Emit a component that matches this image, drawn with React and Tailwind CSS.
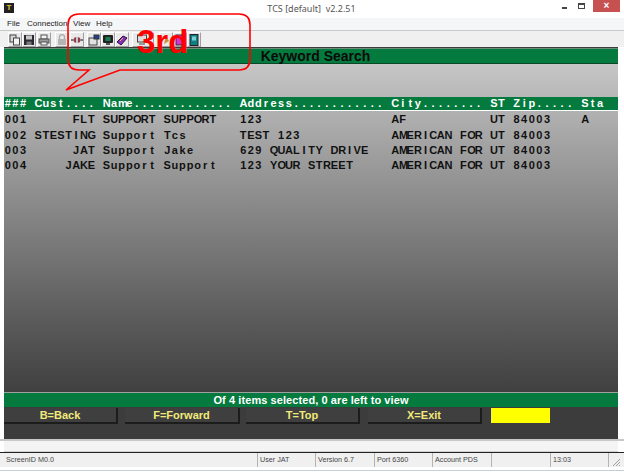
const CHAR_WIDTH = 7.6

const fields = (cells) => {
  const widths = [4, 9, 18, 20, 13, 3, 9, 3]
  return cells.map((c, i) => c.padEnd(widths[i], ' ')).join('')
}

const header = fields(['###', 'Cust....', 'Name.............', 'Address............', 'City........', 'ST', 'Zip.....', 'Sta'])
const rows = [
  fields(['001', '     FLT', 'SUPPORT SUPPORT', '123', 'AF', 'UT', '84003', 'A']),
  fields(['002', 'STESTING', 'Support Tcs', 'TEST 123', 'AMERICAN FOR', 'UT', '84003', '']),
  fields(['003', '     JAT', 'Support Jake', '629 QUALITY DRIVE', 'AMERICAN FOR', 'UT', '84003', '']),
  fields(['004', '    JAKE', 'Support Support', '123 YOUR STREET', 'AMERICAN FOR', 'UT', '84003', '']),
]

// El terminal pinta cada carácter en una celda fija, aunque la fuente sea proporcional
function TermLine({ text, className }) {
  return (
    <div className={`flex whitespace-pre text-[11px] font-bold leading-none ${className}`}>
      {[...text].map((ch, i) => (
        <span key={i} className="inline-block text-center" style={{ width: CHAR_WIDTH }}>
          {ch}
        </span>
      ))}
    </div>
  )
}

function ToolButton({ children, className = '' }) {
  return (
    <div className={`flex h-[15px] w-[14px] items-center justify-center border border-t-white border-r-[#a0a0a0] border-b-[#a0a0a0] border-l-white bg-[#e9e9e9] ${className}`}>
      <svg width="12" height="12" viewBox="0 0 12 12" className="shrink-0">{children}</svg>
    </div>
  )
}

function Toolbar() {
  return (
    <div className="flex h-[17px] items-start border-t border-[#c9c9c9] bg-[#f0f0f0] pt-[1px] pl-[8px]">
      <ToolButton>
        <rect x="1" y="1" width="6" height="7" fill="#d8d8d8" stroke="#444" />
        <rect x="4.5" y="4" width="6" height="7" fill="#f4f4f4" stroke="#444" />
      </ToolButton>
      <ToolButton>
        <rect x="1" y="1" width="10" height="10" fill="#2a2a34" />
        <rect x="3" y="1.5" width="6" height="4" fill="#c8c8c8" />
        <rect x="3.5" y="7.5" width="5" height="3.5" fill="#777" />
      </ToolButton>
      <ToolButton className="ml-[1px]">
        <rect x="3" y="1" width="6" height="4" fill="#f4f4f4" stroke="#555" />
        <rect x="1" y="5" width="10" height="4" fill="#999" stroke="#555" />
        <rect x="3" y="8" width="6" height="3" fill="#f4f4f4" stroke="#555" />
      </ToolButton>
      <ToolButton className="ml-[4px]">
        <path d="M3.5 5V3.2a2.5 2.5 0 0 1 5 0V5" fill="none" stroke="#aaa" strokeWidth="1.3" />
        <rect x="2" y="5" width="8" height="6" fill="#b4b4b4" />
      </ToolButton>
      <ToolButton className="ml-[1px]">
        <ellipse cx="6" cy="6" rx="3.5" ry="3" fill="#9a3a48" />
        <rect x="5" y="3" width="2" height="6" fill="#c8c8c8" />
        <path d="M0 6h2.5M9.5 6h2.5" stroke="#555" strokeWidth="1.6" />
      </ToolButton>
      <ToolButton className="ml-[3px]">
        <rect x="1" y="4" width="8" height="7" fill="#e0e0e0" stroke="#444" />
        <rect x="6" y="1" width="5" height="4" fill="#22409a" stroke="#333" />
      </ToolButton>
      <ToolButton>
        <rect x="1" y="1" width="10" height="8" rx="1" fill="#222" />
        <rect x="3.5" y="3" width="5" height="4" fill="#1c7a55" />
        <rect x="4" y="9" width="4" height="2" fill="#555" />
      </ToolButton>
      <ToolButton>
        <path d="M1 8l6-6 4 2-6 7z" fill="#8a2fb8" stroke="#2a1040" />
        <path d="M4 7l3-3" stroke="#e8c14a" />
      </ToolButton>
      <ToolButton className="ml-[3px] w-[22px]!">
        <rect x="0.5" y="1" width="9" height="7" fill="#ddd" stroke="#444" />
        <rect x="2" y="8" width="6" height="3" fill="#999" />
      </ToolButton>
      <ToolButton className="ml-[5px]">
        <path d="M4 10l2-8 3 5z" fill="#c98f3a" />
      </ToolButton>
      <ToolButton>
        <rect x="2" y="1" width="8" height="10" fill="#d633d6" stroke="#333" />
      </ToolButton>
      <ToolButton>
        <rect x="2" y="0.5" width="8" height="11" fill="#0f7f86" stroke="#222" />
        <rect x="4" y="2.5" width="4" height="4" fill="#7ad0d4" />
      </ToolButton>
    </div>
  )
}

function FnKey({ label, className }) {
  return (
    <div className={`flex h-[16px] items-center justify-center border-r-2 border-b-2 border-[#1c1c1c] bg-[#3f3f3f] text-[11px] font-bold text-[#f2ea7a] ${className}`}>
      {label}
    </div>
  )
}

function StatusCell({ children, className }) {
  return (
    <div className={`flex h-full items-center border-r border-[#b4b4b4] pl-[2px] ${className}`}>{children}</div>
  )
}

export default function App() {
  return (
    <div className="relative flex h-[472px] w-[624px] flex-col overflow-hidden bg-white font-['Liberation_Sans',sans-serif]">
      {/* barra de título */}
      <div className="relative flex h-[18px] items-center justify-center bg-white pr-[1px] text-[9px] text-[#555]">
        <div className="absolute top-[3px] left-[4px] flex h-[10px] w-[10px] items-center justify-center bg-[#222] text-[8px] font-bold leading-none text-[#e4c63c]">
          T
        </div>
        <span className="font-['Noto_Sans',sans-serif] whitespace-pre">TCS [default]  v2.2.51</span>
        <div className="absolute top-0 right-[4px] flex h-[12px] items-start">
          <div className="mt-[7px] mr-[11px] h-[2px] w-[5px] bg-[#444]" />
          <div className="mt-[3px] mr-[8px] h-[6px] w-[7px] border border-t-2 border-[#444]" />
          <div className="flex h-[12px] w-[27px] items-center justify-center bg-[#c75050] text-[10px] font-bold leading-none text-white">
            ×
          </div>
        </div>
      </div>

      {/* menú */}
      <div className="flex h-[12px] items-center bg-[#f5f6f7] pl-[7px] text-[8px] text-[#222]">
        <span className="w-[20px]">File</span>
        <span className="w-[46px]">Connection</span>
        <span className="w-[23px]">View</span>
        <span>Help</span>
      </div>

      <Toolbar />

      {/* pantalla del terminal */}
      <div className="ml-[4px] flex w-[614px] flex-1 flex-col bg-[#3c3c3c]">
        <div className="mt-[1px] flex h-[16px] items-center justify-center border-t border-b border-t-[#6b8f7a] border-b-[#0a4a28] bg-[#047a3e] pl-[9px] text-[14px] font-bold text-[#0a0a0a]">
          Keyword Search
        </div>
        <div className="flex h-[328px] flex-col bg-linear-to-b from-[#c6c6c6] to-[#404040]">
          <div className="mt-[33px] flex h-[14px] items-center border-b border-white bg-[#047a3e]">
            <TermLine text={header} className="text-white" />
          </div>
          <div className="mt-[1px]">
            {rows.map((row) => (
              <div key={row} className="flex h-[15.4px] items-center">
                <TermLine text={row} className="text-[#111]" />
              </div>
            ))}
          </div>
        </div>
        <div className="flex h-[15px] items-center justify-center border-t border-[#a0a0a0] bg-[#047a3e] text-[11px] font-bold tracking-[0.08px] text-white">
          Of 4 items selected, 0 are left to view
        </div>
        <div className="mt-[1px] flex">
          <FnKey label="B=Back" className="w-[114px]" />
          <FnKey label="F=Forward" className="ml-[7px] w-[115px]" />
          <FnKey label="T=Top" className="ml-[6px] w-[114px]" />
          <FnKey label="X=Exit" className="ml-[8px] w-[114px]" />
          <div className="ml-[8px] h-[15px] w-[60px] border-l border-[#2a2a9a] bg-[#ffff00]" />
        </div>
        <div className="flex-1" />
      </div>

      {/* línea de entrada y barra de estado */}
      <div className="h-[2px] w-full bg-[#c8c8c8]" />
      <div className="ml-[4px] h-[11px] w-[614px] border-b border-[#d0d0d0] bg-[#f4f4f4]" />
      <div className="h-[1px] bg-[#222]" />
      <div className="flex h-[14px] items-center bg-[#f0f0f0] pl-[4px] text-[7.2px] text-[#444]">
        <StatusCell className="w-[254px]">ScreenID M0.0</StatusCell>
        <StatusCell className="w-[58px]">User JAT</StatusCell>
        <StatusCell className="w-[59px]">Version 6.7</StatusCell>
        <StatusCell className="w-[58px]">Port 6360</StatusCell>
        <StatusCell className="w-[59px]">Account PDS</StatusCell>
        <StatusCell className="w-[59px]" />
        <StatusCell className="w-[58px]">13:03</StatusCell>
        <svg width="9" height="9" viewBox="0 0 9 9" className="mt-[4px] ml-[3px]">
          <path d="M1 8l7-7M4 8l4-4M7 8l1-1" stroke="#a0a0a0" />
        </svg>
      </div>
      <div className="h-[3px] bg-white" />
      <div className="h-[1px] bg-[#c8ced2]" />
      <div className="h-[1px] bg-white" />

      {/* bocadillo de anotación sobre la captura */}
      <svg className="absolute top-0 left-0" width="624" height="100" viewBox="0 0 624 100" fill="none">
        <path
          d="M79 14H239q11 0 11 11V59q0 11-11 11H120L66 90 89 70H79q-11 0-11-11V25q0-11 11-11z"
          stroke="#f00"
          strokeWidth="1.6"
        />
      </svg>
      <div className="absolute top-[24px] left-[137px] text-[33px] font-bold leading-[36px] text-[#f00]">3rd</div>
    </div>
  )
}
